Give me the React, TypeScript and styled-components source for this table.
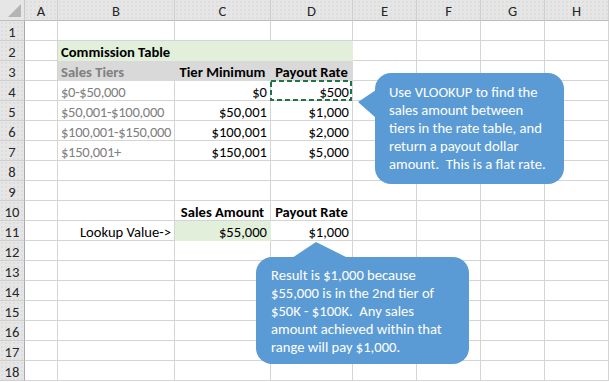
import React from 'react';
import styled, { createGlobalStyle } from 'styled-components';

const GlobalStyle = createGlobalStyle`
  html, body {
    margin: 0;
    padding: 0;
    background: #ffffff;
    overflow: hidden;
  }
  body {
    font-family: Calibri, Carlito, Lato, 'Open Sans', sans-serif;
  }
`;

const COLS = ['A', 'B', 'C', 'D', 'E', 'F', 'G', 'H'];
const WIDTHS = [33, 117, 96, 82, 64, 64, 64, 64];

const Sheet = styled.div`
  position: relative;
  width: 609px;
  height: 382px;
  overflow: hidden;
  display: grid;
  grid-template-columns: 25px ${WIDTHS.map((w) => `${w}px`).join(' ')};
  grid-template-rows: 21px repeat(18, 20px);
  font-size: 14.6px;
  color: #000;
`;

const Corner = styled.div`
  box-sizing: border-box;
  background: #e6e6e6;
  border-right: 1px solid #c8c8c8;
  border-bottom: 1px solid #bdbdbd;
  display: flex;
  align-items: flex-end;
  justify-content: flex-end;
  padding: 0 3px 3px 0;
`;

const ColHead = styled.div`
  box-sizing: border-box;
  background-color: #e6e6e6;
  background-image: radial-gradient(#d2d2d2 0.6px, transparent 0.8px);
  background-size: 4px 4px;
  border-right: 1px solid #cfcfcf;
  border-bottom: 1px solid #bdbdbd;
  display: flex;
  align-items: center;
  justify-content: center;
  color: #262626;
  font-size: 14.6px;
  padding-top: 1px;
`;

const RowHead = styled.div`
  box-sizing: border-box;
  background-color: #e6e6e6;
  background-image: radial-gradient(#d2d2d2 0.6px, transparent 0.8px);
  background-size: 4px 4px;
  border-right: 1px solid #a9a9a9;
  border-bottom: 1px solid #cfcfcf;
  display: flex;
  align-items: center;
  justify-content: center;
  color: #262626;
  font-size: 14.6px;
  padding-top: 2px;
`;

const Cell = styled.div<{
  $align?: string;
  $bold?: boolean;
  $muted?: boolean;
  $fill?: string;
  $tight?: boolean;
}>`
  position: relative;
  box-sizing: border-box;
  background: ${(p) => p.$fill || '#ffffff'};
  border-right: 1px solid ${(p) => p.$fill || '#d4d4d4'};
  border-bottom: 1px solid ${(p) => p.$fill || '#d4d4d4'};
  display: flex;
  align-items: flex-end;
  justify-content: ${(p) =>
    p.$align === 'right' ? 'flex-end' : p.$align === 'center' ? 'center' : 'flex-start'};
  padding: 0 3px 0 3px;
  font-weight: ${(p) => (p.$bold ? 700 : 400)};
  color: ${(p) => (p.$muted ? '#808080' : '#000000')};
  letter-spacing: ${(p) => (p.$tight ? '-0.3px' : 'normal')};
  white-space: nowrap;
  line-height: 15px;
  overflow: hidden;
`;

const CopyMarquee = styled.svg`
  position: absolute;
  left: -1px;
  top: -1px;
  width: 82px;
  height: 21px;
  pointer-events: none;
`;

const CalloutWrap = styled.div`
  position: absolute;
`;

const CalloutBox = styled.div<{ $w: number; $h: number; $pad: string }>`
  position: relative;
  box-sizing: border-box;
  width: ${(p) => p.$w}px;
  height: ${(p) => p.$h}px;
  background: #5b9bd5;
  border-radius: 16px;
  color: #ffffff;
  padding: ${(p) => p.$pad};
  font-size: 14.6px;
  line-height: 18px;
  display: flex;
  flex-direction: column;
`;

const CalloutLine = styled.span`
  white-space: pre;
`;

const Pointer = styled.svg`
  position: absolute;
  overflow: visible;
`;

type Spec = {
  t: string;
  align?: string;
  bold?: boolean;
  muted?: boolean;
  fill?: string;
  marquee?: boolean;
};

const GREEN = '#e2efda';
const GREY = '#d9d9d9';

const data: Record<number, Record<string, Spec>> = {
  2: {
    B: { t: 'Commission Table', bold: true, fill: GREEN },
    C: { t: '', fill: GREEN },
    D: { t: '', fill: GREEN },
  },
  3: {
    B: { t: 'Sales Tiers', bold: true, muted: true, fill: GREY },
    C: { t: 'Tier Minimum', bold: true, align: 'center', fill: GREY },
    D: { t: 'Payout Rate', bold: true, align: 'center', fill: GREY },
  },
  4: {
    B: { t: '$0-$50,000', muted: true },
    C: { t: '$0', align: 'right' },
    D: { t: '$500', align: 'right', marquee: true },
  },
  5: {
    B: { t: '$50,001-$100,000', muted: true },
    C: { t: '$50,001', align: 'right' },
    D: { t: '$1,000', align: 'right' },
  },
  6: {
    B: { t: '$100,001-$150,000', muted: true },
    C: { t: '$100,001', align: 'right' },
    D: { t: '$2,000', align: 'right' },
  },
  7: {
    B: { t: '$150,001+', muted: true },
    C: { t: '$150,001', align: 'right' },
    D: { t: '$5,000', align: 'right' },
  },
  10: {
    C: { t: 'Sales Amount', bold: true, align: 'center' },
    D: { t: 'Payout Rate', bold: true, align: 'center' },
  },
  11: {
    B: { t: 'Lookup Value->', align: 'right' },
    C: { t: '$55,000', align: 'right', fill: GREEN },
    D: { t: '$1,000', align: 'right' },
  },
};

function Callout({
  x, y, w, h, pad, pointer, pointerBox, lines,
}: {
  x: number; y: number; w: number; h: number; pad: string;
  pointer: string; pointerBox: { left: number; top: number; w: number; h: number };
  lines: string[];
}) {
  return (
    <CalloutWrap style={{ left: x, top: y }}>
      <Pointer
        width={pointerBox.w}
        height={pointerBox.h}
        style={{ left: pointerBox.left, top: pointerBox.top }}
        viewBox={`0 0 ${pointerBox.w} ${pointerBox.h}`}
      >
        <polygon points={pointer} fill="#5b9bd5" />
      </Pointer>
      <CalloutBox $w={w} $h={h} $pad={pad}>
        {lines.map((l, i) => (
          <CalloutLine key={i}>{l}</CalloutLine>
        ))}
      </CalloutBox>
    </CalloutWrap>
  );
}

export default function App() {
  const rows = Array.from({ length: 18 }, (_, i) => i + 1);
  return (
    <>
      <GlobalStyle />
      <Sheet>
        <Corner>
          <svg width="13" height="13" viewBox="0 0 13 13">
            <polygon points="13,0 13,13 0,13" fill="#b4b4b4" />
          </svg>
        </Corner>
        {COLS.map((c) => (
          <ColHead key={c}>{c}</ColHead>
        ))}
        {rows.map((r) => (
          <React.Fragment key={r}>
            <RowHead>{r}</RowHead>
            {COLS.map((c) => {
              const s = data[r]?.[c];
              return (
                <Cell
                  key={c}
                  $align={s?.align}
                  $bold={s?.bold}
                  $muted={s?.muted}
                  $fill={s?.fill}
                  $tight={!!s?.muted && !s?.bold}
                  style={s?.marquee ? { overflow: 'visible' } : undefined}
                >
                  {s?.t}
                  {s?.marquee && (
                    <CopyMarquee viewBox="0 0 82 21">
                      <rect
                        x="1"
                        y="1"
                        width="80"
                        height="19"
                        fill="none"
                        stroke="#217346"
                        strokeWidth="2"
                        strokeDasharray="5 3"
                      />
                    </CopyMarquee>
                  )}
                </Cell>
              );
            })}
          </React.Fragment>
        ))}

        <Callout
          x={375}
          y={73}
          w={189}
          h={111}
          pad="10px 8px 0 14px"
          pointer="18,0 0,12 18,28"
          pointerBox={{ left: -17, top: 17, w: 18, h: 28 }}
          lines={[
            'Use VLOOKUP to find the',
            'sales amount between',
            'tiers in the rate table, and',
            'return a payout dollar',
            'amount.  This is a flat rate.',
          ]}
        />

        <Callout
          x={256}
          y={257}
          w={213}
          h={107}
          pad="9px 8px 0 15px"
          pointer="0,16 24,0 56,16"
          pointerBox={{ left: 36, top: -15, w: 56, h: 16 }}
          lines={[
            'Result is $1,000 because',
            '$55,000 is in the 2nd tier of',
            '$50K - $100K.  Any sales',
            'amount achieved within that',
            'range will pay $1,000.',
          ]}
        />
      </Sheet>
    </>
  );
}
